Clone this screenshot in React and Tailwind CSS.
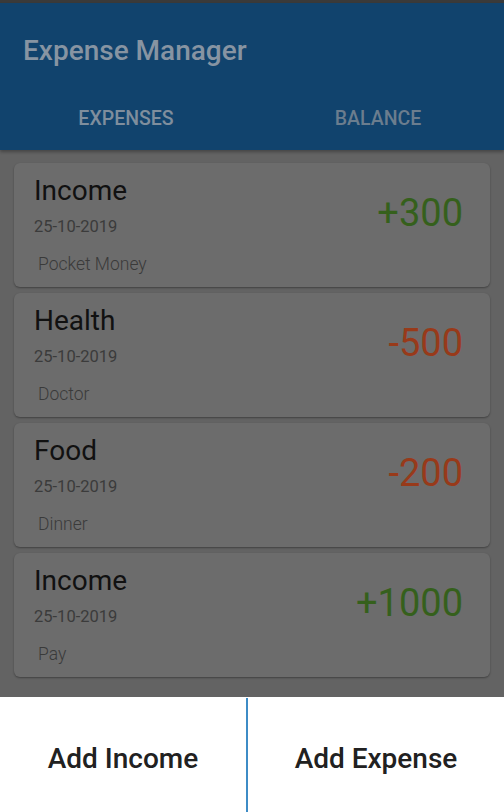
import React from 'react';

const items = [
  { id: 1, title: 'Income', date: '25-10-2019', note: 'Pocket Money', amount: '+300', income: true },
  { id: 2, title: 'Health', date: '25-10-2019', note: 'Doctor', amount: '-500', income: false },
  { id: 3, title: 'Food', date: '25-10-2019', note: 'Dinner', amount: '-200', income: false },
  { id: 4, title: 'Income', date: '25-10-2019', note: 'Pay', amount: '+1000', income: true },
];

function ExpenseCard({ item }) {
  return (
    <div className="h-[124px] shrink-0 rounded-[6px] bg-[#6c6c6c] shadow-[0_1px_2px_rgba(0,0,0,0.35)] flex items-start justify-between pl-[20px] pr-[27px]">
      <div className="flex flex-col pt-[11px]">
        <span className="text-[28px] leading-[34px] text-[#111111]">{item.title}</span>
        <span className="text-[16.5px] leading-[22px] mt-[8px] text-[#3b3b3b]">{item.date}</span>
        <span className="text-[17.5px] leading-[22px] mt-[15px] ml-[4px] font-light text-[#3a3a3a]">{item.note}</span>
      </div>
      <span
        className={
          item.income
            ? 'text-[38px] leading-[44px] mt-[28px] text-[#35601c]'
            : 'text-[38px] leading-[44px] mt-[28px] text-[#983a1a]'
        }
      >
        {item.amount}
      </span>
    </div>
  );
}

export default function App() {
  return (
    <div className="w-full h-[812px] flex flex-col overflow-hidden bg-[#636363] font-['Roboto','Liberation_Sans',sans-serif]">
      {/* status strip */}
      <div className="h-[3px] bg-[#3a3a3a]" />

      {/* App bar */}
      <div className="bg-[#11436d] flex flex-col shadow-[0_2px_3px_rgba(0,0,0,0.3)]">
        <div className="h-[95px] flex items-center px-[23px]">
          <h1 className="text-[28px] font-medium text-[#8794a2]">Expense Manager</h1>
        </div>
        <div className="h-[52px] grid grid-cols-2">
          <div className="flex items-start justify-center pt-[6px]">
            <span className="text-[19.5px] font-medium text-[#7f8e9d]">EXPENSES</span>
          </div>
          <div className="flex items-start justify-center pt-[6px]">
            <span className="text-[19.5px] font-medium text-[#6b7d8e]">BALANCE</span>
          </div>
        </div>
      </div>

      {/* List */}
      <div className="flex-1 overflow-hidden flex flex-col gap-[6px] px-[14px] pt-[13px]">
        {items.map((item) => (
          <ExpenseCard key={item.id} item={item} />
        ))}
      </div>

      {/* Bottom sheet */}
      <div className="h-[115px] bg-white grid grid-cols-[246px_2px_1fr]">
        <button className="flex items-center justify-center text-[28px] font-medium text-[#212121] pt-[8px]">
          Add Income
        </button>
        <div className="bg-[#3d8cc6] mt-[1px]" />
        <button className="flex items-center justify-center text-[28px] font-medium text-[#212121] pt-[8px]">
          Add Expense
        </button>
      </div>
    </div>
  );
}
